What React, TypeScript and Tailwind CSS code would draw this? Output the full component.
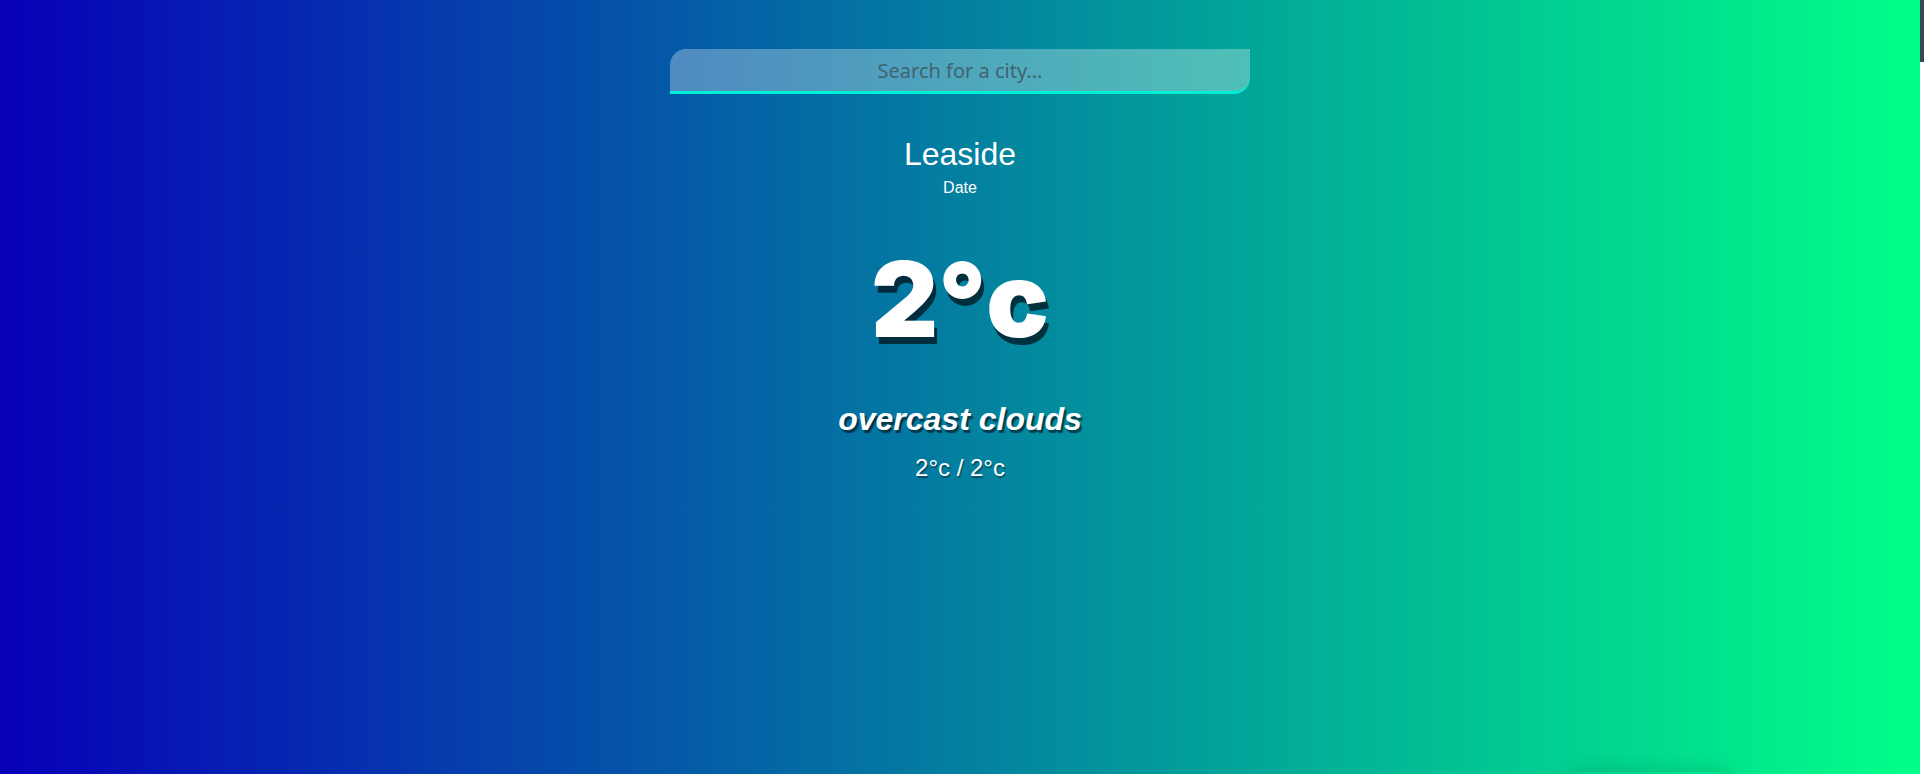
import { useState } from "react";

function SearchBar() {
  const [query, setQuery] = useState("");
  return (
    <div className="mt-[49px] w-[580px]">
      <input
        type="text"
        value={query}
        onChange={(e) => setQuery(e.target.value)}
        placeholder="Search for a city..."
        className="block h-[45px] w-full rounded-tl-[16px] rounded-br-[16px] border-b-[3px] border-[#00f0d6] bg-white/30 px-4 text-center font-['Noto_Sans',sans-serif] text-[20px] text-[#21444e] outline-none placeholder:text-[#3f6470]"
      />
    </div>
  );
}

// thin page scrollbar as it shows in the capture
function ScrollRail() {
  return (
    <div className="flex w-[4px] flex-col bg-white">
      <div className="h-[62px] w-full bg-[#3a4650]" />
    </div>
  );
}

export default function App() {
  const weather = {
    city: "Leaside",
    temp: 2,
    description: "overcast clouds",
    low: 2,
    high: 2,
  };

  return (
    <div className="flex h-screen w-full overflow-hidden">
      <div className="flex-1 bg-[linear-gradient(to_right,#0700b8_0%,#00ff88_100%)] font-['Liberation_Sans',Arial,sans-serif] text-white">
        <main className="flex flex-col items-center">
          <SearchBar />

          <h1 className="mt-[42px] text-[32px] leading-[36px] font-normal">{weather.city}</h1>
          <p className="mt-[6px] text-[16px] leading-[20px]">Date</p>

          <div className="mt-[49px] font-['Inter',sans-serif] text-[104px] leading-[104px] font-black [text-shadow:3px_7px_0_rgba(0,20,30,0.75)]">
            {weather.temp}°c
          </div>

          <p className="mt-[50px] text-[32px] leading-[36px] font-bold italic [text-shadow:2px_3px_1px_rgba(0,30,40,0.7)]">
            {weather.description}
          </p>
          <p className="mt-[17px] text-[24px] leading-[28px] [text-shadow:1px_2px_1px_rgba(0,30,40,0.5)]">
            {weather.low}°c / {weather.high}°c
          </p>
        </main>

        <section className="mt-[290px] flex justify-end pr-[187px]">
          <div className="h-[200px] w-[166px] rounded-[16px] shadow-[0_-2px_18px_rgba(0,60,40,0.18)]" />
        </section>
      </div>
      <ScrollRail />
    </div>
  );
}
